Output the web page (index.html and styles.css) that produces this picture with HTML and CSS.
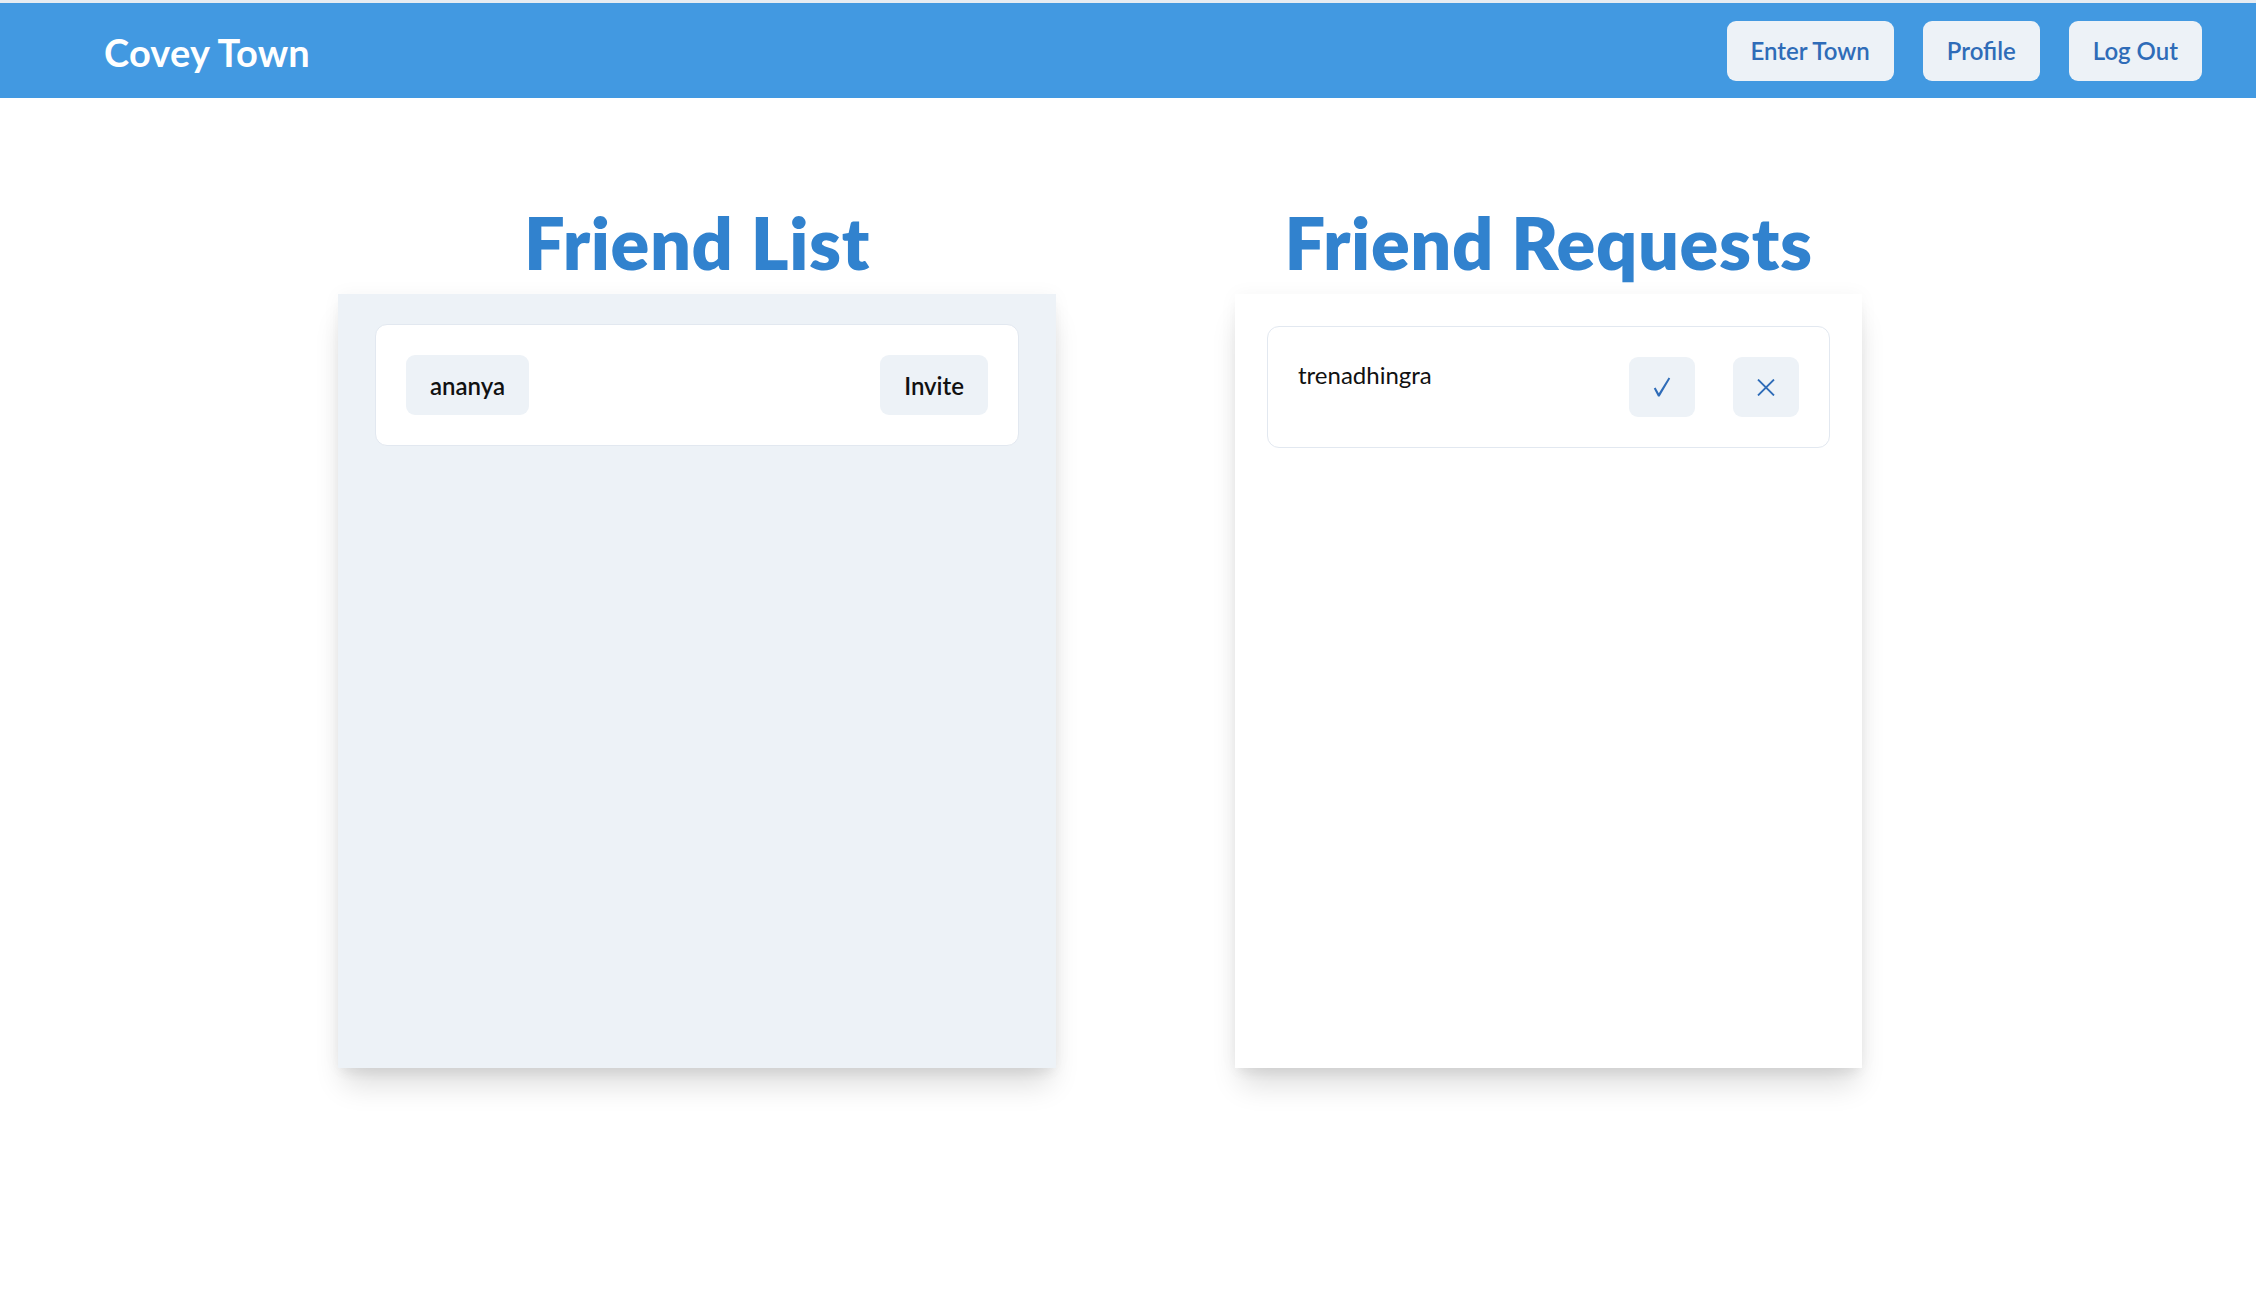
FILE: index.html
```html
<!DOCTYPE html>
<html lang="en">
<head>
<meta charset="utf-8">
<title>Covey Town</title>
<link rel="stylesheet" href="styles.css">
</head>
<body>
<header class="nav">
  <div class="brand">Covey Town</div>
  <nav class="nav-actions">
    <button class="nav-btn">Enter Town</button>
    <button class="nav-btn">Profile</button>
    <button class="nav-btn">Log Out</button>
  </nav>
</header>
<main class="lists">
  <section class="column col-friends">
    <h2 class="col-title">Friend List</h2>
    <div class="panel panel-gray">
      <div class="card friend-row">
        <button class="chip">ananya</button>
        <button class="chip">Invite</button>
      </div>
    </div>
  </section>
  <section class="column col-requests">
    <h2 class="col-title">Friend Requests</h2>
    <div class="panel panel-white">
      <div class="card request-row">
        <span class="req-name">trenadhingra</span>
        <div class="req-actions">
          <button class="icon-btn" aria-label="Accept">
            <svg width="18" height="20" viewBox="0 0 18 20"><path d="M0.8 11.4 L2.6 10.5 L5.8 16.2 L15.6 0.5 L17.2 1.4 L6.6 19.4 L5 19.4 Z" fill="#2f6cb8"/></svg>
          </button>
          <button class="icon-btn" aria-label="Decline">
            <svg width="18" height="17" viewBox="0 0 18 17"><path d="M1 0.5 L17 16.5 M17 0.5 L1 16.5" stroke="#2f6cb8" stroke-width="1.8" fill="none"/></svg>
          </button>
        </div>
      </div>
    </div>
  </section>
</main>
</body>
</html>
```

FILE: styles.css
```css
* { box-sizing: border-box; }
html, body { margin: 0; padding: 0; }
body {
  background: #ffffff;
  font-family: Lato, "Open Sans", "Liberation Sans", sans-serif;
  color: #1a202c;
  border-top: 3px solid #e6ecf2;
  min-height: 1290px;
}
.nav {
  height: 95px;
  background: #4299e1;
  display: flex;
  align-items: center;
  justify-content: space-between;
  padding: 0 54px 0 104px;
}
.brand {
  color: #ffffff;
  font-size: 38px;
  font-weight: 700;
  letter-spacing: 0.2px;
  padding-top: 3px;
}
.nav-actions {
  display: flex;
  gap: 29px;
}
.nav-btn {
  height: 60px;
  padding: 0 24px;
  border: none;
  border-radius: 9px;
  background: #edf2f7;
  color: #2f6cb8;
  font-family: inherit;
  font-size: 24px;
  font-weight: 600;
}
.lists {
  display: flex;
  align-items: flex-start;
  gap: 179px;
  padding: 101px 0 0 338px;
}
.column {
  display: flex;
  flex-direction: column;
}
.col-friends { width: 718px; }
.col-requests { width: 627px; }
.col-title {
  margin: 0 0 9px;
  text-align: center;
  color: #3182ce;
  font-size: 72px;
  line-height: 86px;
  font-weight: 800;
  letter-spacing: 0.6px;
}
.panel {
  height: 774px;
  box-shadow: 0 22px 28px -6px rgba(0,0,0,0.14), 0 8px 12px -4px rgba(0,0,0,0.06), 0 0 18px rgba(0,0,0,0.04);
}
.panel-gray {
  background: #edf2f7;
  padding: 30px 37px;
}
.panel-white {
  background: #ffffff;
  padding: 32px 32px;
}
.card {
  background: #ffffff;
  border: 1px solid #e2e8f0;
  border-radius: 12px;
  padding: 30px;
}
.friend-row {
  display: flex;
  justify-content: space-between;
  align-items: center;
}
.chip {
  height: 60px;
  padding: 0 24px;
  border: none;
  border-radius: 9px;
  background: #edf2f7;
  color: #111111;
  font-family: inherit;
  font-size: 24px;
  font-weight: 600;
}
.request-row {
  display: flex;
  justify-content: space-between;
  align-items: flex-start;
}
.req-name {
  font-size: 24px;
  line-height: 36px;
  color: #111111;
}
.req-actions {
  display: flex;
  gap: 38px;
}
.icon-btn {
  width: 66px;
  height: 60px;
  border: none;
  border-radius: 9px;
  background: #edf2f7;
  display: flex;
  align-items: center;
  justify-content: center;
  padding: 0;
}
.icon-btn svg { display: block; }
```
